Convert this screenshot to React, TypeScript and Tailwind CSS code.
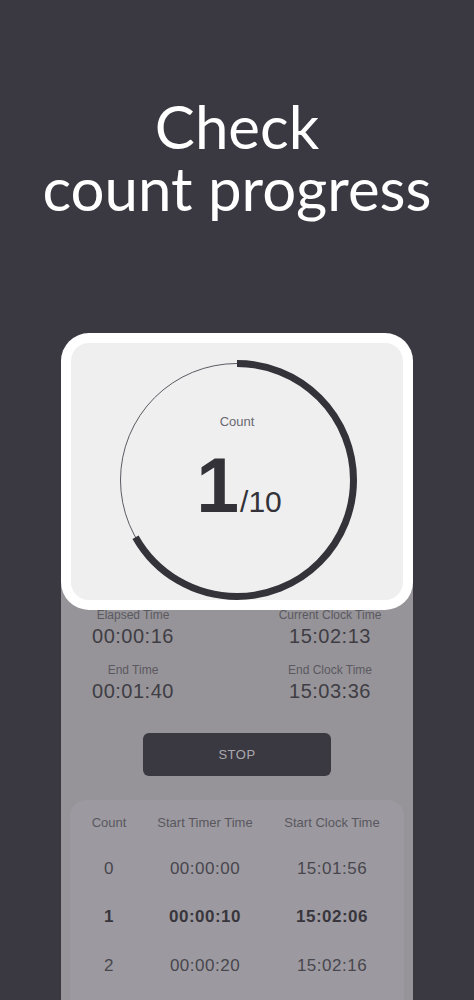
const ROWS = [
  { n: '0', timer: '00:00:00', clock: '15:01:56', current: false },
  { n: '1', timer: '00:00:10', clock: '15:02:06', current: true },
  { n: '2', timer: '00:00:20', clock: '15:02:16', current: false },
]

const STATS = [
  { label: 'Elapsed Time', value: '00:00:16' },
  { label: 'Current Clock Time', value: '15:02:13' },
  { label: 'End Time', value: '00:01:40' },
  { label: 'End Clock Time', value: '15:03:36' },
]

function ProgressRing({ progress }: { progress: number }) {
  const r = 116.5
  const c = 2 * Math.PI * r
  return (
    <div className="relative h-[240px] w-[240px]">
      <svg width="240" height="240" viewBox="0 0 240 240" className="absolute inset-0">
        <circle cx="120" cy="120" r={r} fill="none" stroke="#5b5a60" strokeWidth="1" />
        <circle
          cx="120" cy="120" r={r} fill="none" stroke="#35333a" strokeWidth="7"
          strokeDasharray={`${c * progress} ${c}`}
          transform="rotate(-90 120 120)"
        />
      </svg>
      <div className="absolute inset-0 flex flex-col items-center">
        <span className="mt-[55px] text-[13px] leading-none text-[#6a696f]">Count</span>
        <div className="mt-[19px] flex items-baseline pl-[4px] text-[#333238]">
          <span className="text-[77px] font-bold leading-none">1</span>
          <span className="ml-[1px] text-[30px] leading-none">/10</span>
        </div>
      </div>
    </div>
  )
}

export default function App() {
  return (
    <div className="min-h-[1000px] overflow-hidden bg-[#3a3841] font-['Liberation_Sans',Arial,sans-serif]">
      <h1 className="pt-[95px] text-center font-['Lato','Noto_Sans',sans-serif] text-[60px] leading-[62px] text-white">
        <span className="block">Check</span>
        <span className="block">count progress</span>
      </h1>

      <div className="mx-auto mt-[114px] w-[352px]">
        {/* highlighted count card */}
        <div className="relative z-10 rounded-[28px] bg-white p-[10px]">
          <div className="flex h-[257px] items-center justify-center rounded-[18px] bg-[#efeff0] pt-[16px]">
            <ProgressRing progress={0.668} />
          </div>
        </div>

        {/* dimmed app screen */}
        <div className="-mt-[60px] bg-[#969499] pt-[58px]">
          <div className="grid grid-cols-[144px_146px] gap-x-[52px] gap-y-[15px] text-center">
            {STATS.map((s) => (
              <div key={s.label}>
                <div className="text-[12px] leading-[14px] text-[#5b5960]">{s.label}</div>
                <div className="mt-[2px] text-[20px] leading-[24px] tracking-[0.5px] text-[#3f3d44]">{s.value}</div>
              </div>
            ))}
          </div>

          <div className="mt-[30px] flex justify-center">
            <button className="flex h-[43px] w-[188px] items-center justify-center rounded-[6px] bg-[#3a3840] text-[13px] tracking-[0.5px] text-[#aaa8ae]">
              STOP
            </button>
          </div>

          <div className="mx-[9px] mt-[24px] rounded-t-[16px] bg-[#9c9aa0] pb-[20px] pt-[15px] text-center">
            <div className="grid grid-cols-[78px_114px_140px] text-[13px] leading-[16px] text-[#59575e]">
              <span>Count</span>
              <span>Start Timer Time</span>
              <span>Start Clock Time</span>
            </div>
            {ROWS.map((row) => (
              <div
                key={row.n}
                className={`grid h-[48.5px] grid-cols-[78px_114px_140px] items-center text-[17px] tracking-[0.5px] ${
                  row.current ? 'font-bold text-[#38363c]' : 'text-[#48464d]'
                } ${row.n === '0' ? 'mt-[13px]' : ''}`}
              >
                <span>{row.n}</span>
                <span>{row.timer}</span>
                <span>{row.clock}</span>
              </div>
            ))}
          </div>
        </div>
      </div>
    </div>
  )
}
